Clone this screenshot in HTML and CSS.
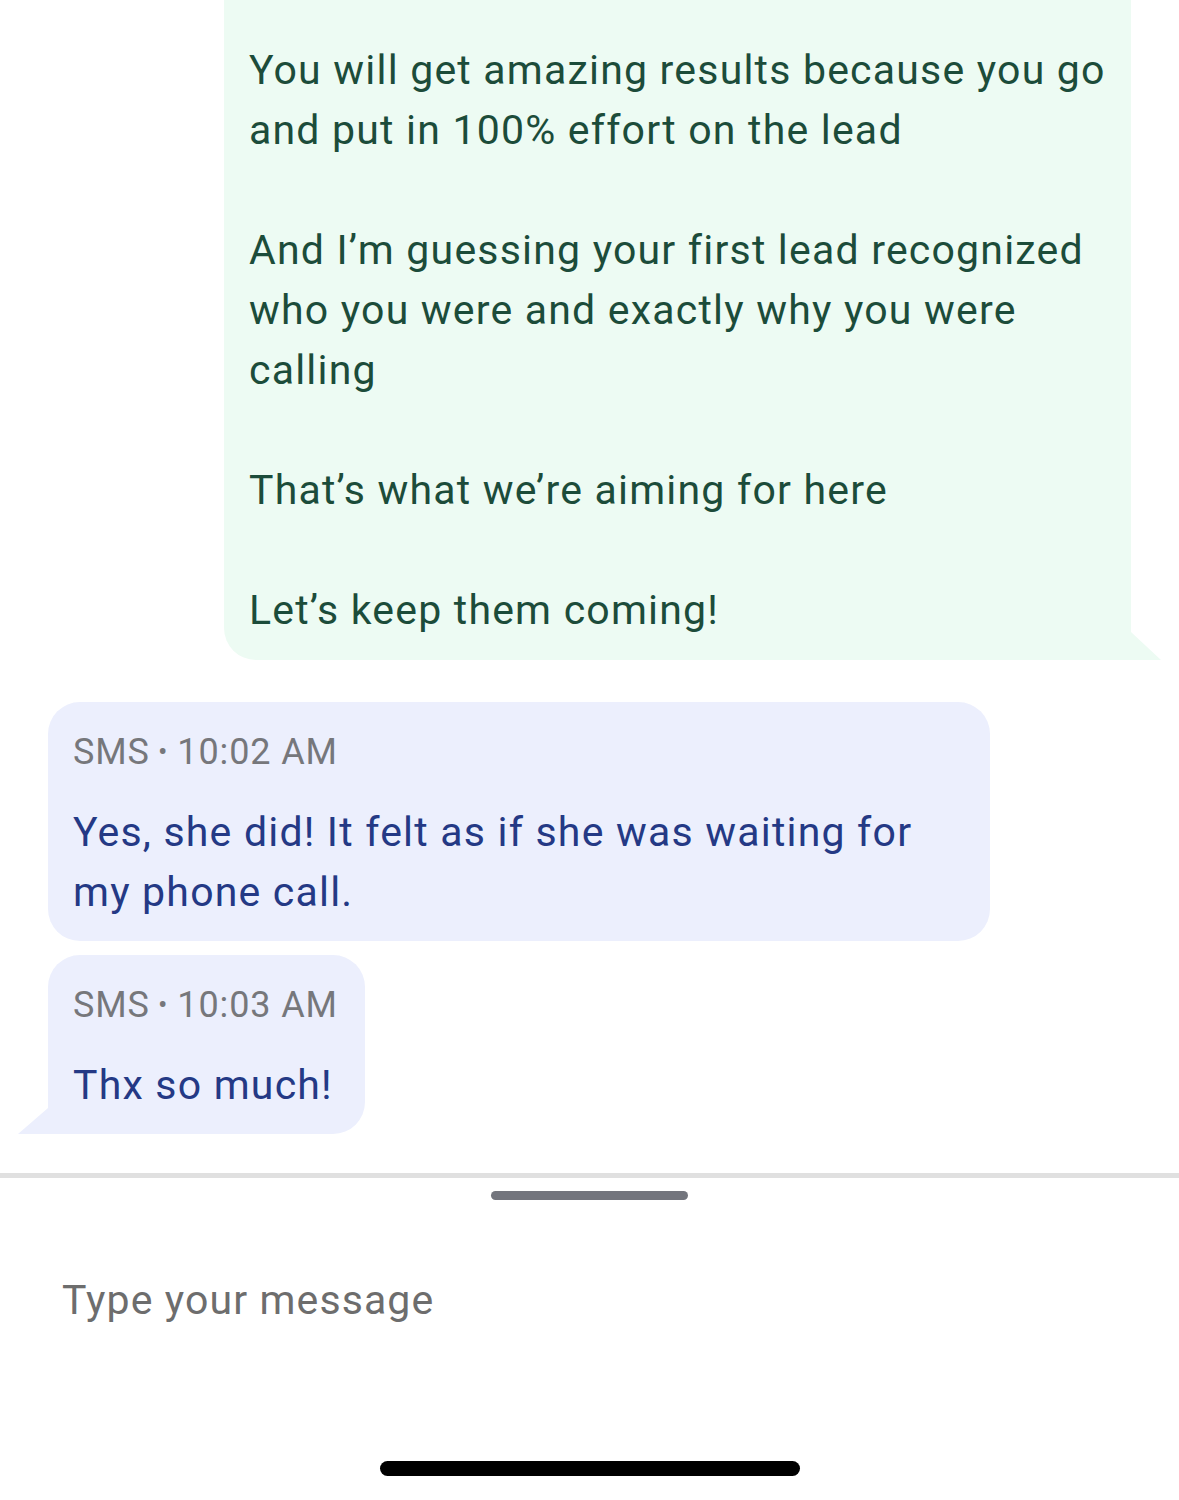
FILE: index.html
```html
<!DOCTYPE html>
<html lang="en">
<head>
<meta charset="utf-8">
<title>Conversation</title>
<link rel="stylesheet" href="styles.css">
</head>
<body>
<div class="screen">
  <div class="thread">
    <div class="bubble out">
      <p class="text">You will get amazing results because you go and put in 100% effort on the lead</p>
      <p class="text">And I’m guessing your first lead recognized who you were and exactly why you were calling</p>
      <p class="text">That’s what we’re aiming for here</p>
      <p class="text">Let’s keep them coming!</p>
    </div>
    <div class="group-in">
      <div class="bubble in first">
        <div class="meta">SMS<span class="dot">•</span>10:02 AM</div>
        <p class="text">Yes, she did! It felt as if she was waiting for my phone call.</p>
      </div>
      <div class="bubble in last">
        <div class="meta">SMS<span class="dot">•</span>10:03 AM</div>
        <p class="text">Thx so much!</p>
      </div>
    </div>
  </div>
  <div class="composer">
    <div class="handle"></div>
    <div class="input">Type your message</div>
  </div>
  <div class="home-bar"><div class="home-indicator"></div></div>
</div>
</body>
</html>
```

FILE: styles.css
```css
* { box-sizing: border-box; }
html, body { margin: 0; padding: 0; background: #ffffff; }
body {
  font-family: Roboto, "Noto Sans", "Liberation Sans", sans-serif;
  width: 1179px;
  height: 1500px;
  overflow: hidden;
}
.screen {
  display: flex;
  flex-direction: column;
  height: 1500px;
}
.thread {
  display: flex;
  flex-direction: column;
  padding: 0 48px 39px 48px;
}
.bubble {
  position: relative;
}
.text {
  margin: 0;
  font-size: 41px;
  line-height: 60px;
  letter-spacing: 1.2px;
}
.bubble.out {
  align-self: flex-end;
  width: 907px;
  background: #edfbf3;
  color: #1c4c3a;
  border-radius: 0 0 0 32px;
  padding: 40px 20px 20px 25px;
}
.bubble.out .text + .text { margin-top: 60px; }
.bubble.out::after {
  content: "";
  position: absolute;
  right: -30px;
  bottom: 0;
  width: 30px;
  height: 28px;
  background: #edfbf3;
  clip-path: polygon(0 0, 100% 100%, 0 100%);
}
.group-in {
  display: flex;
  flex-direction: column;
  align-items: flex-start;
  gap: 14px;
  margin-top: 42px;
}
.bubble.in {
  background: #eceffd;
  color: #243985;
  border-radius: 32px;
  padding: 25px 27px 19px 25px;
}
.bubble.in.first { width: 942px; }
.bubble.in.last { border-bottom-left-radius: 0; }
.bubble.in.last::after {
  content: "";
  position: absolute;
  left: -30px;
  bottom: 0;
  width: 30px;
  height: 26px;
  background: #eceffd;
  clip-path: polygon(100% 0, 100% 100%, 0 100%);
}
.meta {
  font-size: 36px;
  line-height: 50px;
  letter-spacing: 0.9px;
  color: #76777b;
  margin-bottom: 22px;
}
.dot {
  font-size: 28px;
  margin: 0 9px 0 8px;
  position: relative;
  top: -3px;
}
.composer {
  border-top: 5px solid #e0e0e0;
  display: flex;
  flex-direction: column;
}
.handle {
  align-self: center;
  width: 197px;
  height: 9px;
  border-radius: 5px;
  background: #73757d;
  margin-top: 13px;
}
.input {
  margin: 70px 0 0 62px;
  font-size: 41px;
  line-height: 60px;
  color: #6d6d6d;
  letter-spacing: 1.1px;
}
.home-bar {
  flex: 1;
  display: flex;
  justify-content: center;
  align-items: flex-end;
  padding-bottom: 24px;
}
.home-indicator {
  width: 420px;
  height: 15px;
  border-radius: 8px;
  background: #000000;
}
```
